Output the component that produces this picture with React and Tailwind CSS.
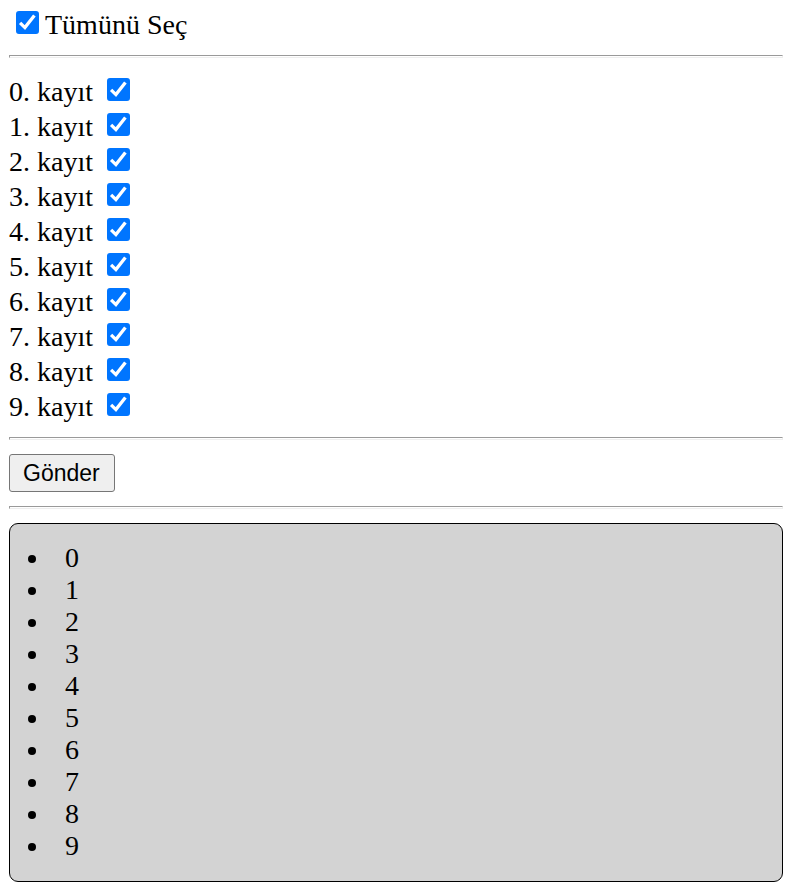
import { useState } from "react";

const records = [0, 1, 2, 3, 4, 5, 6, 7, 8, 9];

function Check({ id, checked, onChange }) {
  return (
    <span className="mt-[2px] inline-grid size-[23px] shrink-0">
      <input
        id={id}
        type="checkbox"
        checked={checked}
        onChange={onChange}
        className="col-start-1 row-start-1 size-[23px] appearance-none rounded-[3px] border-2 border-gray-500 bg-white checked:border-[#0075ff] checked:bg-[#0075ff]"
      />
      {checked && (
        <svg
          viewBox="0 0 23 23"
          className="pointer-events-none col-start-1 row-start-1 size-[23px]"
          fill="none"
          stroke="#fff"
          strokeWidth="3.3"
          aria-hidden="true"
        >
          <path d="M4.1 11.9 L8.9 16.6 L18.4 4.4" />
        </svg>
      )}
    </span>
  );
}

function Rule() {
  return (
    <hr className="h-[3px] border border-t-[#9a9a9a] border-r-[#eeeeee] border-b-[#eeeeee] border-l-[#9a9a9a]" />
  );
}

export default function App() {
  const [selected, setSelected] = useState(records);
  const all = selected.length === records.length;
  const toggle = (n) =>
    setSelected((s) => (s.includes(n) ? s.filter((x) => x !== n) : [...s, n].sort((a, b) => a - b)));

  return (
    <main className="bg-white px-[9px] pb-2 pt-[9px] font-['Liberation_Serif',serif] text-[28px] leading-8 text-black">
      <div className="flex items-start gap-[6px] pb-[14px] pl-[7px]">
        <Check id="all" checked={all} onChange={() => setSelected(all ? [] : records)} />
        <label htmlFor="all">Tümünü Seç</label>
      </div>
      <Rule />
      <div className="pb-[11px] pt-[18px]">
        {records.map((n) => (
          <div key={n} className="flex h-[35px] items-start gap-[14px]">
            <label htmlFor={`record-${n}`}>{n}. kayıt</label>
            <Check id={`record-${n}`} checked={selected.includes(n)} onChange={() => toggle(n)} />
          </div>
        ))}
      </div>
      <Rule />
      <button
        type="button"
        className="my-[14px] block h-[38px] rounded-[3px] border border-[#767676] bg-[#efefef] pl-[13px] pr-[14px] font-['Liberation_Sans',sans-serif] text-[23px] leading-8"
      >
        Gönder
      </button>
      <Rule />
      <ul className="mt-[14px] list-disc rounded-[9px] border border-black bg-[#d3d3d3] pb-[19px] pl-[41px] pt-[18px]">
        {selected.map((n) => (
          <li key={n} className="pl-[14px]">
            {n}
          </li>
        ))}
      </ul>
    </main>
  );
}
